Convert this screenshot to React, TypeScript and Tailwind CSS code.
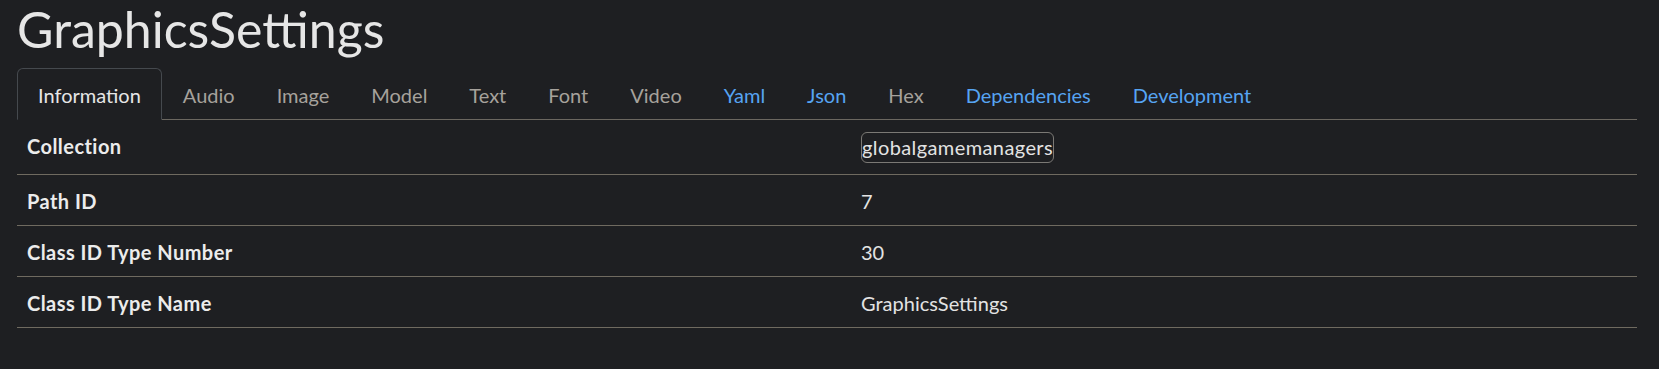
const tabs = [
  { label: "Information", active: true },
  { label: "Audio" },
  { label: "Image" },
  { label: "Model" },
  { label: "Text" },
  { label: "Font" },
  { label: "Video" },
  { label: "Yaml", link: true },
  { label: "Json", link: true },
  { label: "Hex" },
  { label: "Dependencies", link: true },
  { label: "Development", link: true },
];

const rows = [
  { label: "Collection", value: "globalgamemanagers", badge: true },
  { label: "Path ID", value: "7" },
  { label: "Class ID Type Number", value: "30" },
  { label: "Class ID Type Name", value: "GraphicsSettings" },
];

const App = () => {
  return (
    <div className="min-h-screen w-full bg-[#1e1f22] text-[#e3e3e3] font-['Lato','Segoe_UI',sans-serif]">
      <div className="ml-[17px] w-[1620px]">
        <h1 className="text-[50px] leading-[58px] mb-[10px] text-[#e6e6e6]">
          GraphicsSettings
        </h1>

        <nav className="flex border-b border-[#6b6760]">
          {tabs.map((tab) => (
            <a
              key={tab.label}
              className={
                tab.active
                  ? "-mb-px px-[20px] pt-[11px] pb-[9px] text-[20px] leading-[30px] border border-[#45494e] border-b-[#1e1f22] rounded-t-[6px] bg-[#1e1f22] text-[#e6e6e6]"
                  : tab.link
                  ? "-mb-px px-[20px] pt-[11px] pb-[9px] text-[20px] leading-[30px] border border-transparent text-[#56a4f2]"
                  : "-mb-px px-[20px] pt-[11px] pb-[9px] text-[20px] leading-[30px] border border-transparent text-[#a6a29c]"
              }
            >
              {tab.label}
            </a>
          ))}
        </nav>

        <div className="grid grid-cols-[834px_1fr] text-[20px] leading-[30px]">
          {rows.map((row) => (
            <div
              key={row.label}
              className={
                row.badge
                  ? "col-span-2 grid grid-cols-subgrid items-center h-[55px] pb-[2px] border-b border-[#6f6a60]"
                  : "col-span-2 grid grid-cols-subgrid items-center h-[51px] pt-[2px] border-b border-[#6f6a60]"
              }
            >
              <div className="px-[10px] font-bold tracking-[0.45px] text-[#ececec]">
                {row.label}
              </div>
              <div className="px-[10px]">
                {row.badge ? (
                  <span className="inline-block border border-[#7b7975] rounded-[6px] leading-[29px] tracking-[0.4px] mt-[2px]">
                    {row.value}
                  </span>
                ) : (
                  row.value
                )}
              </div>
            </div>
          ))}
        </div>
      </div>
    </div>
  );
};

export default App;
